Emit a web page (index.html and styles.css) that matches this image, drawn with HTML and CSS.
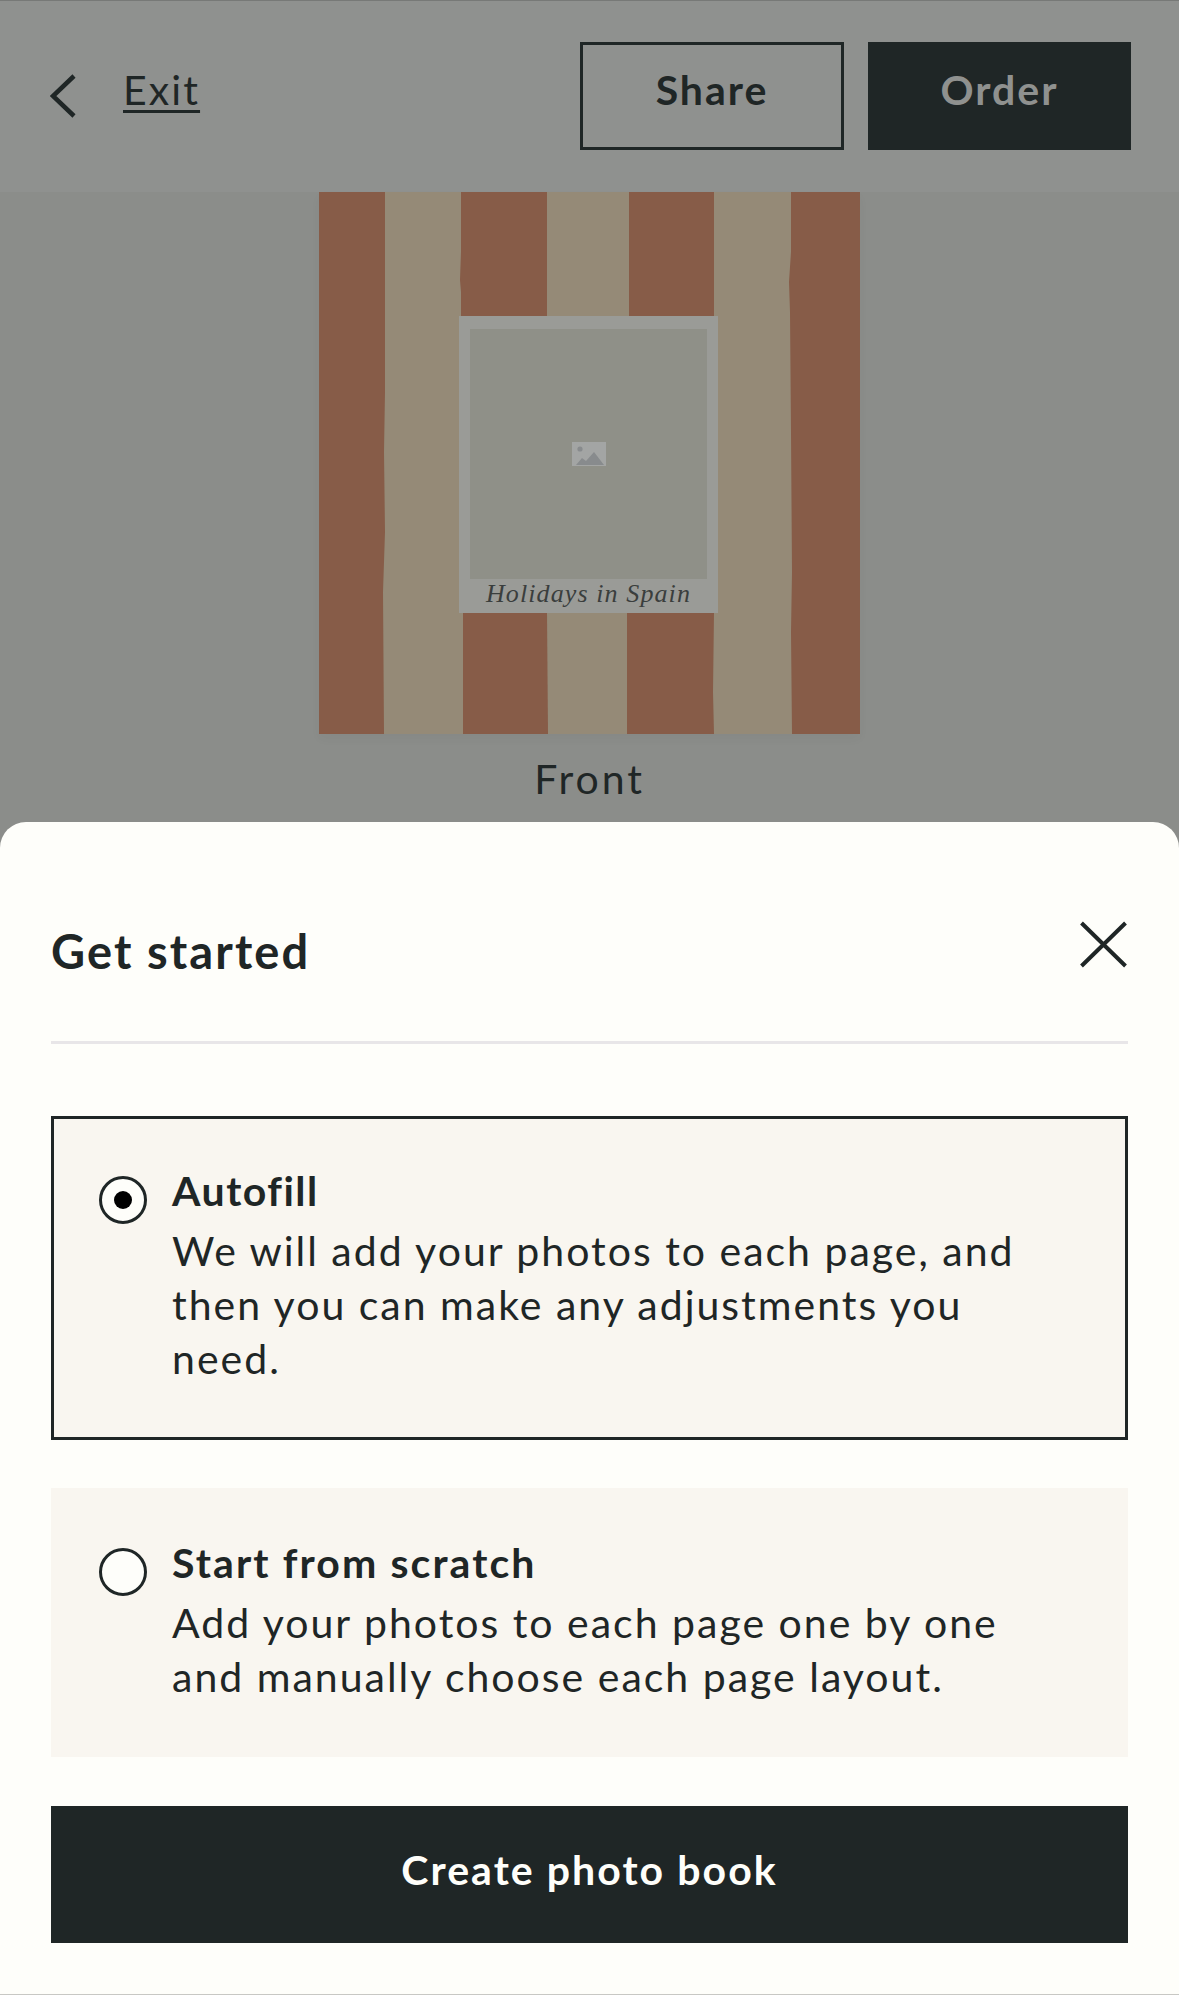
FILE: index.html
```html
<!DOCTYPE html>
<html lang="en">
<head>
  <meta charset="UTF-8">
  <meta name="viewport" content="width=device-width, initial-scale=1.0">
  <title>Get started</title>
  <link rel="stylesheet" href="styles.css">
</head>
<body>
  <header class="topbar">
    <a class="exit" href="#">
      <svg class="chevron" viewBox="0 0 26 44" width="26" height="44"><path d="M24 2 L3 22 L24 42" fill="none" stroke="#1f2626" stroke-width="4.5"/></svg>
      <span class="exit-label">Exit</span>
    </a>
    <div class="actions">
      <button class="btn btn-outline">Share</button>
      <button class="btn btn-solid">Order</button>
    </div>
  </header>

  <main class="preview">
    <div class="book">
      <svg class="stripes" viewBox="0 0 541 542" width="541" height="542" preserveAspectRatio="none">
        <rect width="541" height="542" fill="#958a77"/>
        <path fill="#875c48" d="M0 0 H66 L66 200 L65 260 L66 340 L64 400 L65 542 H0 Z"/>
        <path fill="#875c48" d="M142 0 H228 V124 H142 L142 100 L141 88 L142 60 Z"/>
        <path fill="#875c48" d="M310 0 H395 V124 H310 Z"/>
        <path fill="#875c48" d="M472 0 H541 V542 H473 L472 440 L473 380 L472 240 L471 120 L470 90 L472 60 Z"/>
        <path fill="#875c48" d="M144 420 H228 L229 542 H144 Z"/>
        <path fill="#875c48" d="M308 420 H395 L394 500 L395 542 H308 Z"/>
      </svg>
      <div class="panel">
        <div class="photo">
          <svg class="photo-icon" viewBox="0 0 34 24" width="34" height="24">
            <rect width="34" height="24" fill="#a3a5a4"/>
            <circle cx="8" cy="7" r="2.6" fill="#888b8d"/>
            <path d="M4 23 L10 16 L14 19 L22 10 L32 23 Z" fill="#888b8d"/>
          </svg>
        </div>
        <div class="caption">Holidays in Spain</div>
      </div>
    </div>
    <p class="side-label">Front</p>
  </main>

  <section class="sheet">
    <div class="sheet-head">
      <h2>Get started</h2>
      <svg class="close" viewBox="0 0 47 47" width="47" height="47"><path d="M1.5 2 L45.5 45 M45.5 2 L1.5 45" fill="none" stroke="#1f2626" stroke-width="4"/></svg>
    </div>

    <div class="option option-selected">
      <span class="radio radio-on"></span>
      <div class="option-text">
        <h3>Autofill</h3>
        <p>We will add your photos to each page, and then you can make any adjustments you need.</p>
      </div>
    </div>

    <div class="option">
      <span class="radio"></span>
      <div class="option-text">
        <h3>Start from scratch</h3>
        <p>Add your photos to each page one by one and manually choose each page layout.</p>
      </div>
    </div>

    <button class="create">Create photo book</button>
  </section>
</body>
</html>
```

FILE: styles.css
```css
* {
  box-sizing: border-box;
}
body {
  margin: 0;
  height: 1995px;
  overflow: hidden;
  display: flex;
  flex-direction: column;
  font-family: Lato, "Open Sans", sans-serif;
  font-size: 41px;
  letter-spacing: 2px;
  line-height: 54px;
  color: #1f2626;
  background: #8b8d8a;
  border-bottom: 1px solid #c8c8c4;
}

/* top bar */
.topbar {
  height: 192px;
  flex: none;
  display: flex;
  justify-content: space-between;
  padding: 41px 48px 0 50px;
  background: #8f918f;
  border-top: 1px solid #777977;
}
.exit {
  display: flex;
  align-items: flex-start;
  gap: 47px;
  color: #1f2626;
  text-decoration: none;
}
.chevron {
  margin-top: 32px;
}
.exit-label {
  margin-top: 21px;
  letter-spacing: 2.1px;
  text-decoration: underline;
  text-decoration-thickness: 3px;
  text-underline-offset: 5px;
}
.actions {
  display: flex;
  gap: 24px;
}
.btn {
  width: 264px;
  height: 108px;
  padding: 0 0 12px;
  font: inherit;
  font-weight: 700;
  letter-spacing: 2px;
  border: 3px solid #1f2626;
  border-radius: 0;
}
.btn-outline {
  background: transparent;
  color: #1f2626;
}
.btn-solid {
  width: 263px;
  background: #1f2626;
  color: #8f918f;
}

/* cover preview */
.preview {
  height: 630px;
  flex: none;
  display: flex;
  flex-direction: column;
  align-items: center;
}
.book {
  position: relative;
  width: 541px;
  height: 542px;
  box-shadow: 0 5px 10px rgba(0, 0, 0, 0.03);
}
.stripes {
  display: block;
}
.panel {
  position: absolute;
  left: 140px;
  top: 124px;
  width: 259px;
  height: 297px;
  display: flex;
  flex-direction: column;
  padding: 13px 11px 0;
  background: #9a9b97;
}
.photo {
  height: 250px;
  flex: none;
  display: flex;
  align-items: center;
  justify-content: center;
  background: #8f9088;
}
.caption {
  flex: 1;
  display: flex;
  align-items: center;
  justify-content: center;
  padding-bottom: 4px;
  font-family: "Liberation Serif", serif;
  font-style: italic;
  font-size: 26px;
  line-height: 30px;
  letter-spacing: 1.1px;
  color: #3a3e3d;
  white-space: nowrap;
}
.side-label {
  margin: 18px 0 0;
  letter-spacing: 2.9px;
}

/* bottom sheet */
.sheet {
  flex: 1;
  padding: 0 51px;
  background: #fefefa;
  border-radius: 26px 26px 0 0;
}
.sheet-head {
  height: 222px;
  display: flex;
  justify-content: space-between;
  align-items: flex-start;
  padding-top: 102px;
  border-bottom: 3px solid #e8e6e8;
}
.sheet-head h2 {
  margin: 0;
  font-size: 47px;
  font-weight: 700;
  letter-spacing: 2.1px;
}
.close {
  margin-top: -3px;
  margin-right: 1px;
}
.option {
  display: flex;
  gap: 25px;
  margin-top: 48px;
  padding: 45px 60px 50px 45px;
  background: #f9f6f0;
  border: 3px solid transparent;
}
.option-selected {
  margin-top: 72px;
  padding-bottom: 51px;
  border-color: #1f2626;
}
.radio {
  width: 48px;
  height: 48px;
  flex: none;
  margin-top: 12px;
  display: flex;
  align-items: center;
  justify-content: center;
  border: 3px solid #1f2626;
  border-radius: 50%;
  background: #fefefa;
}
.radio-on::after {
  content: "";
  width: 18px;
  height: 18px;
  border-radius: 50%;
  background: #000;
}
.option-text h3 {
  margin: 0 0 6px;
  font-size: 41px;
  font-weight: 700;
  letter-spacing: 2.1px;
}
.option-selected h3 {
  letter-spacing: 1.5px;
}
.option-text p {
  margin: 0;
}
.create {
  display: block;
  width: 100%;
  height: 137px;
  margin-top: 49px;
  padding: 0 0 10px;
  font: inherit;
  font-weight: 700;
  letter-spacing: 2.05px;
  color: #fefefa;
  background: #1f2626;
  border: 0;
}
```
